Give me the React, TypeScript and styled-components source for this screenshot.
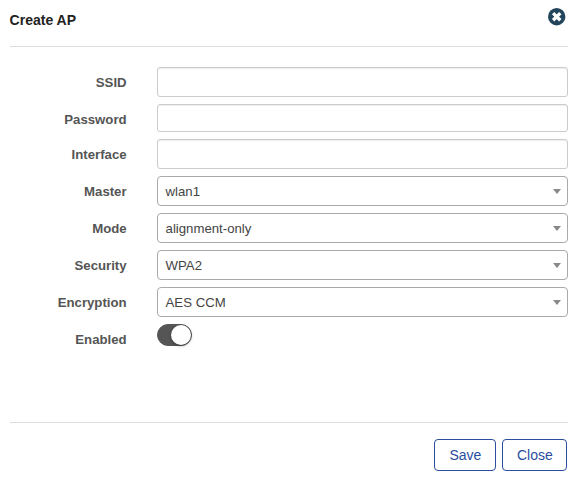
import React, { useState } from "react";
import styled, { createGlobalStyle } from "styled-components";

const GlobalStyle = createGlobalStyle`
  *, *::before, *::after { box-sizing: border-box; }
  body {
    margin: 0;
    background: #fff;
    font-family: "Liberation Sans", Arial, sans-serif;
  }
`;

const Dialog = styled.section`
  width: 577px;
  height: 480px;
  padding: 0 9px 0 10px;
  display: flex;
  flex-direction: column;
  overflow: hidden;
`;

const Header = styled.header`
  height: 47px;
  display: flex;
  justify-content: space-between;
  align-items: flex-start;
  border-bottom: 1px solid #ddd;
`;

const Title = styled.h1`
  margin: 12px 0 0 -0.4px;
  font-size: 14px;
  line-height: 16px;
  font-weight: 700;
  color: #222;
`;

const DismissButton = styled.button`
  margin: 8px 2px 0 0;
  padding: 0;
  width: 18px;
  height: 18px;
  border: 0;
  background: none;
  svg { display: block; }
`;

const Form = styled.form`
  height: 375px;
  padding-top: 20px;
  display: flex;
  flex-direction: column;
  gap: 7px;
`;

const Row = styled.div<{ $height?: number }>`
  height: ${(p) => p.$height ?? 30}px;
  flex: none;
  display: grid;
  grid-template-columns: 116.6px 411px;
  column-gap: 30.4px;
`;

const Label = styled.label`
  padding-top: 8px;
  text-align: right;
  font-size: 13.2px;
  line-height: 15px;
  font-weight: 700;
  color: #555;
`;

const TextInput = styled.input`
  width: 100%;
  height: 100%;
  padding: 0 8px;
  border: 1px solid #ccc;
  border-radius: 3px;
  outline: none;
  background: #fff;
  box-shadow: inset 0 1px 1px rgba(0, 0, 0, 0.075);
  font: 13px "Liberation Sans", Arial, sans-serif;
  color: #555;
`;

const SelectBox = styled.div`
  height: 30px;
  padding: 0 6px 0 7.6px;
  display: flex;
  align-items: center;
  justify-content: space-between;
  border: 1px solid #aaa;
  border-radius: 4px;
  color: #444;
`;

const SelectValue = styled.span`
  padding-top: 1px;
  font-size: 13.2px;
  line-height: 15px;
`;

const Arrow = styled.span`
  border: 4px solid transparent;
  border-top: 5px solid #888;
  border-bottom: 0;
`;

const Switch = styled.button<{ $on: boolean }>`
  padding: 0;
  width: 35px;
  height: 22px;
  display: flex;
  align-items: center;
  justify-content: ${(p) => (p.$on ? "flex-end" : "flex-start")};
  border: 1px solid #555;
  border-radius: 11px;
  background: ${(p) => (p.$on ? "#555" : "#fff")};
`;

const Knob = styled.span`
  width: 20px;
  height: 20px;
  border-radius: 50%;
  background: #fff;
  box-shadow: 0 1px 3px rgba(0, 0, 0, 0.4);
`;

const Footer = styled.footer`
  padding: 16px 1px 0 0;
  display: flex;
  justify-content: flex-end;
  gap: 6px;
  border-top: 1px solid #ddd;
`;

const ActionButton = styled.button<{ $width: number }>`
  width: ${(p) => p.$width}px;
  height: 32px;
  padding: 0 0 0 0.8px;
  border: 1px solid #2a4d9e;
  border-radius: 4px;
  background: #fff;
  font: 14px/20px "Liberation Sans", Arial, sans-serif;
  color: #2a4d9e;
`;

const textFields = [
  { name: "SSID", height: 30 },
  { name: "Password", height: 28 },
  { name: "Interface", height: 30 },
];

const selectFields = [
  { name: "Master", value: "wlan1" },
  { name: "Mode", value: "alignment-only" },
  { name: "Security", value: "WPA2" },
  { name: "Encryption", value: "AES CCM" },
];

export default function App() {
  const [enabled, setEnabled] = useState(true);
  return (
    <>
      <GlobalStyle />
      <Dialog role="dialog" aria-label="Create AP">
        <Header>
          <Title>Create AP</Title>
          <DismissButton type="button" aria-label="Dismiss">
            <svg width="18" height="18" viewBox="0 0 18 18">
              <circle cx="8.7" cy="8.7" r="8.7" fill="#22455c" />
              <path d="M5.1 5.1l7.2 7.2M12.3 5.1l-7.2 7.2" stroke="#fff" strokeWidth="3.4" />
            </svg>
          </DismissButton>
        </Header>
        <Form>
          {textFields.map((f) => (
            <Row key={f.name} $height={f.height}>
              <Label htmlFor={f.name}>{f.name}</Label>
              <TextInput id={f.name} />
            </Row>
          ))}
          {selectFields.map((f) => (
            <Row key={f.name}>
              <Label>{f.name}</Label>
              <SelectBox>
                <SelectValue>{f.value}</SelectValue>
                <Arrow />
              </SelectBox>
            </Row>
          ))}
          <Row>
            <Label>Enabled</Label>
            <Switch
              type="button"
              role="switch"
              aria-checked={enabled}
              $on={enabled}
              onClick={() => setEnabled(!enabled)}
            >
              <Knob />
            </Switch>
          </Row>
        </Form>
        <Footer>
          <ActionButton $width={62}>Save</ActionButton>
          <ActionButton $width={65}>Close</ActionButton>
        </Footer>
      </Dialog>
    </>
  );
}
